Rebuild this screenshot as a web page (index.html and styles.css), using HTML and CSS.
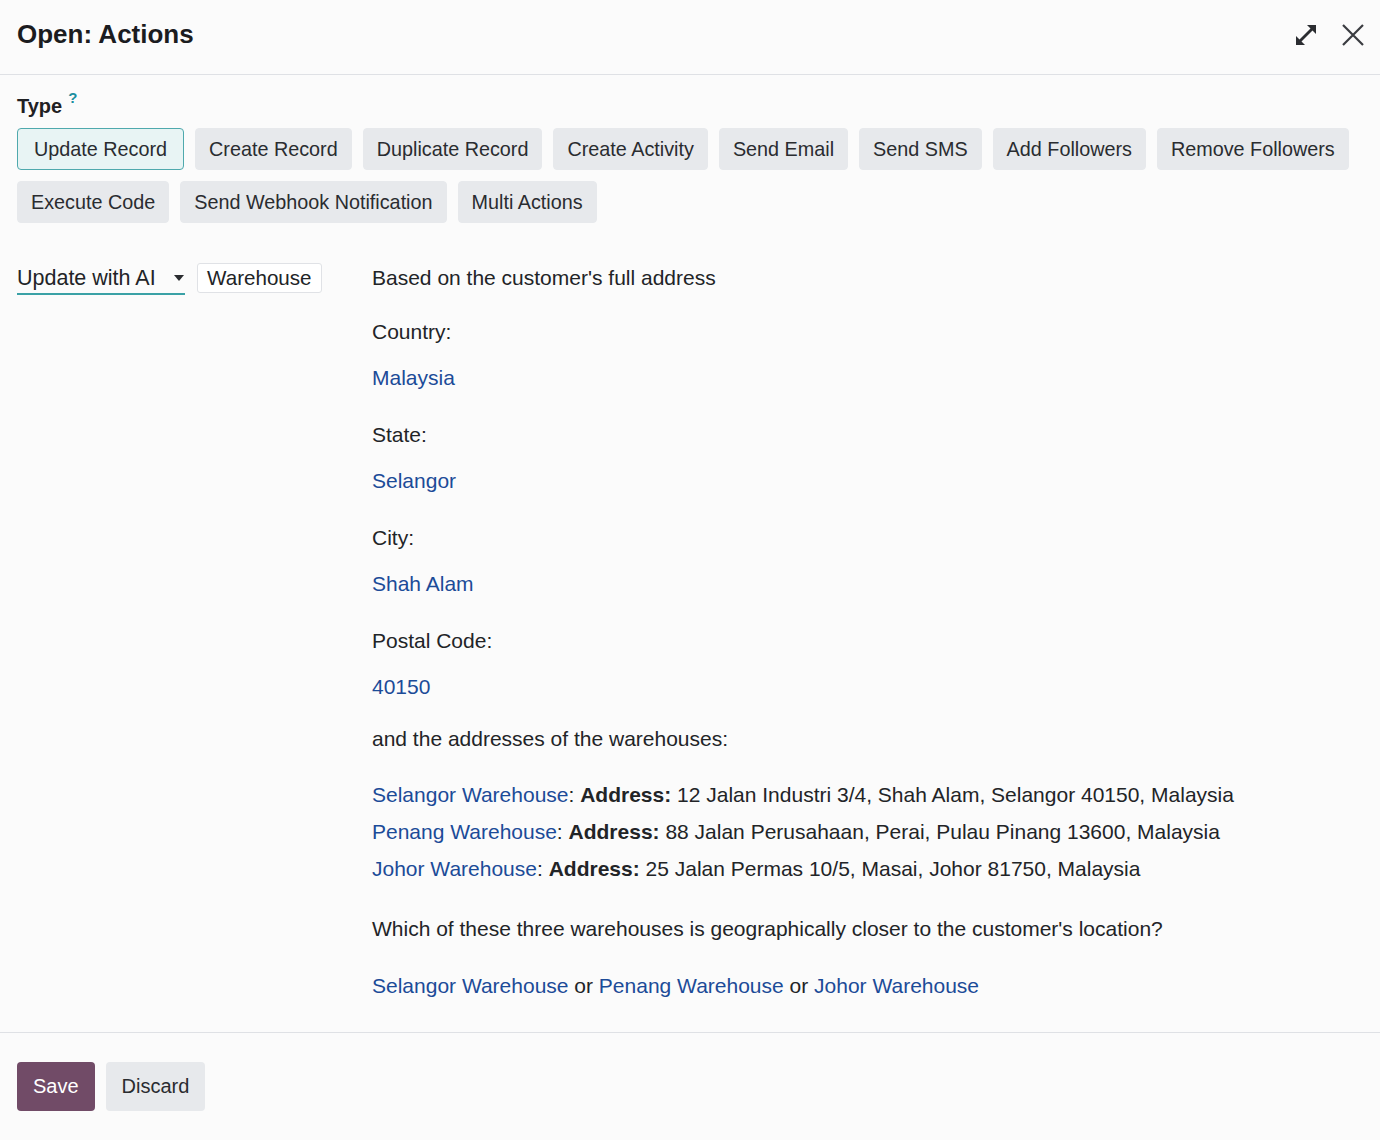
FILE: index.html
```html
<!DOCTYPE html>
<html lang="en">
<head>
    <meta charset="UTF-8">
    <title>Open: Actions</title>
    <link rel="stylesheet" href="styles.css">
</head>
<body>
    <div class="dialog">
        <header class="dialog-header">
            <h4 class="dialog-title">Open: Actions</h4>
            <div class="header-tools">
                <button class="icon-btn" title="Expand">
                    <svg width="26" height="26" viewBox="0 0 26 26">
                        <line x1="6" y1="20" x2="20" y2="6" stroke="#2b2d31" stroke-width="2.8"/>
                        <polygon points="14,3 23,3 23,12" fill="#2b2d31"/>
                        <polygon points="3,14 3,23 12,23" fill="#2b2d31"/>
                    </svg>
                </button>
                <button class="icon-btn" title="Close">
                    <svg width="24" height="24" viewBox="0 0 24 24">
                        <path d="M2 2 L22 22 M22 2 L2 22" stroke="#3a3c40" stroke-width="2.2" fill="none"/>
                    </svg>
                </button>
            </div>
        </header>

        <main class="dialog-body">
            <div class="field-label">Type<sup>?</sup></div>
            <div class="type-options">
                <button class="type-btn active">Update Record</button>
                <button class="type-btn">Create Record</button>
                <button class="type-btn">Duplicate Record</button>
                <button class="type-btn">Create Activity</button>
                <button class="type-btn">Send Email</button>
                <button class="type-btn">Send SMS</button>
                <button class="type-btn">Add Followers</button>
                <button class="type-btn">Remove Followers</button>
                <button class="type-btn">Execute Code</button>
                <button class="type-btn">Send Webhook Notification</button>
                <button class="type-btn">Multi Actions</button>
            </div>

            <div class="action-row">
                <div class="action-left">
                    <div class="select">
                        <span>Update with AI</span>
                        <span class="caret"></span>
                    </div>
                    <span class="field-tag">Warehouse</span>
                </div>
                <div class="prompt">
                    <p class="para">Based on the customer's full address</p>
                    <p class="label">Country:</p>
                    <p class="value"><a href="#">Malaysia</a></p>
                    <p class="label">State:</p>
                    <p class="value"><a href="#">Selangor</a></p>
                    <p class="label">City:</p>
                    <p class="value"><a href="#">Shah Alam</a></p>
                    <p class="label">Postal Code:</p>
                    <p class="value last"><a href="#">40150</a></p>
                    <p class="para">and the addresses of the warehouses:</p>
                    <div class="warehouses">
                        <div><a href="#">Selangor Warehouse</a>: <b>Address:</b> 12 Jalan Industri 3/4, Shah Alam, Selangor 40150, Malaysia</div>
                        <div><a href="#">Penang Warehouse</a>: <b>Address:</b> 88 Jalan Perusahaan, Perai, Pulau Pinang 13600, Malaysia</div>
                        <div><a href="#">Johor Warehouse</a>: <b>Address:</b> 25 Jalan Permas 10/5, Masai, Johor 81750, Malaysia</div>
                    </div>
                    <p class="para question">Which of these three warehouses is geographically closer to the customer's location?</p>
                    <p class="para end"><a href="#">Selangor Warehouse</a> or <a href="#">Penang Warehouse</a> or <a href="#">Johor Warehouse</a></p>
                </div>
            </div>
        </main>

        <footer class="dialog-footer">
            <button class="btn-save">Save</button>
            <button class="btn-discard">Discard</button>
        </footer>
    </div>
</body>
</html>
```

FILE: styles.css
```css
body {
    margin: 0;
    background-color: #fbfbfb;
    font-family: "Liberation Sans", Arial, sans-serif;
    font-size: 20px;
    color: #222427;
}

.dialog {
    height: 1140px;
    display: flex;
    flex-direction: column;
}

.dialog-header {
    height: 74px;
    border-bottom: 1px solid #dfe1e5;
    display: flex;
    align-items: center;
    justify-content: space-between;
    padding: 0 15px 0 17px;
}

.dialog-title {
    margin: 0;
    font-size: 26px;
    font-weight: bold;
    color: #1b1c1f;
    padding-bottom: 6px;
}

.header-tools {
    display: flex;
    align-items: center;
    gap: 22px;
    padding-bottom: 5px;
}

.icon-btn {
    border: none;
    background: none;
    padding: 0;
    display: flex;
    cursor: pointer;
}

.dialog-body {
    padding: 11px 17px 31px;
}

.field-label {
    font-weight: bold;
    line-height: 24px;
    color: #1f2023;
}

.field-label sup {
    color: #1b8fa0;
    font-size: 15px;
    font-weight: bold;
    margin-left: 6px;
    vertical-align: 10px;
}

.type-options {
    display: flex;
    flex-wrap: wrap;
    gap: 11px 11px;
    margin-top: 10px;
}

.type-btn {
    height: 42px;
    padding: 0 13px;
    font-family: inherit;
    font-size: 19.8px;
    color: #2a2c30;
    background-color: #e7e9ec;
    border: 1px solid #e7e9ec;
    border-radius: 4px;
}

.type-btn.active {
    padding: 0 16px;
    background-color: #e8f4f4;
    border-color: #4fa9ad;
}

.action-row {
    display: grid;
    grid-template-columns: 355px 1fr;
    margin-top: 40px;
}

.action-left {
    display: flex;
    align-items: flex-start;
    gap: 12px;
}

.select {
    width: 168px;
    height: 30px;
    font-size: 21.5px;
    border-bottom: 2px solid #3aa1a6;
    display: flex;
    align-items: center;
    justify-content: space-between;
    box-sizing: content-box;
}

.caret {
    width: 0;
    height: 0;
    border-left: 5px solid transparent;
    border-right: 5px solid transparent;
    border-top: 6px solid #2a2c30;
    margin-right: 1px;
}

.field-tag {
    height: 28px;
    line-height: 28px;
    padding: 0 9px;
    font-size: 20.6px;
    border: 1px solid #e0e2e6;
    border-radius: 3px;
    background-color: #ffffff;
}

.prompt {
    font-size: 21px;
}

.prompt p {
    margin: 0;
    line-height: 30px;
}

.prompt .para {
    margin-bottom: 24px;
}

.prompt .label {
    margin-bottom: 16px;
}

.prompt .value {
    margin-bottom: 27px;
}

.prompt .value.last {
    margin-bottom: 22px;
}

.prompt .para.question {
    margin-bottom: 27px;
}

.prompt .para.end {
    margin-bottom: 0;
}

.prompt a {
    color: #1c4b98;
    text-decoration: none;
}

.warehouses {
    line-height: 37px;
    margin-top: -2px;
    margin-bottom: 27px;
}

.dialog-footer {
    border-top: 1px solid #dfe1e5;
    padding: 29px 17px;
    display: flex;
    gap: 11px;
}

.btn-save, .btn-discard {
    height: 49px;
    padding: 0 16px;
    font-family: inherit;
    font-size: 20px;
    border: none;
    border-radius: 4px;
}

.btn-save {
    background-color: #714b67;
    color: #ffffff;
}

.btn-discard {
    background-color: #e7e9ec;
    color: #2a2c30;
}
```
